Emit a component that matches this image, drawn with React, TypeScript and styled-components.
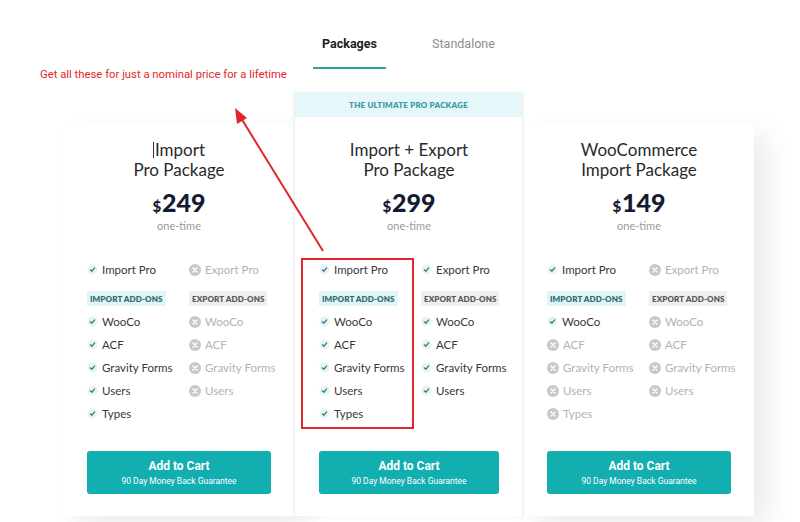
import React from "react";
import styled, { createGlobalStyle } from "styled-components";

const GlobalStyle = createGlobalStyle`
  html, body {
    margin: 0;
    padding: 0;
    background: #ffffff;
  }
  * {
    box-sizing: border-box;
  }
`;

const Page = styled.div`
  position: relative;
  width: 800px;
  height: 522px;
  overflow: hidden;
  background: #fff;
  font-family: "Lato", "Open Sans", sans-serif;
`;

const TabRow = styled.div`
  display: flex;
  gap: 41px;
  padding: 36px 0 0 313px;
`;

const Tab = styled.div<{ $active?: boolean }>`
  width: 73px;
  padding-bottom: 15px;
  text-align: center;
  font-family: "Roboto", sans-serif;
  font-size: 12.5px;
  line-height: 16px;
  font-weight: ${(p) => (p.$active ? 700 : 400)};
  color: ${(p) => (p.$active ? "#1d1d1d" : "#8d8d8d")};
  border-bottom: 2px solid ${(p) => (p.$active ? "#2aa5a0" : "transparent")};
`;

const Note = styled.div`
  position: absolute;
  left: 40px;
  top: 68px;
  font-family: "Roboto", sans-serif;
  font-size: 11.3px;
  color: #e5262b;
`;

const Highlight = styled.div`
  position: absolute;
  left: 301px;
  top: 258px;
  width: 113px;
  height: 171px;
  border: 2px solid #e0262b;
  z-index: 5;
`;

const ArrowLayer = styled.svg`
  position: absolute;
  left: 0;
  top: 0;
  z-index: 5;
  pointer-events: none;
`;

const Group = styled.div`
  display: flex;
  align-items: flex-start;
  margin: 23px 0 0 63px;
`;

const Card = styled.div<{ $featured?: boolean }>`
  position: relative;
  width: ${(p) => (p.$featured ? "229px" : "231px")};
  margin-top: ${(p) => (p.$featured ? "0" : "33px")};
  background: #fff;
  z-index: ${(p) => (p.$featured ? 2 : 1)};
  box-shadow: ${(p) =>
    p.$featured
      ? "0 0 5px rgba(0, 0, 0, 0.05)"
      : "14px 10px 26px rgba(0, 0, 0, 0.08)"};
  border-left: ${(p) => (p.$featured ? "1px solid #efefef" : "none")};
  border-right: ${(p) => (p.$featured ? "1px solid #efefef" : "none")};
`;

const Banner = styled.div`
  height: 25px;
  background: #e5f7f8;
  color: #3d9ca3;
  font-size: 8px;
  font-weight: 800;
  letter-spacing: 0.2px;
  display: flex;
  align-items: center;
  justify-content: center;
`;

const Body = styled.div<{ $featured?: boolean }>`
  padding: ${(p) => (p.$featured ? "23px" : "15px")} 23px 22px 24px;
  display: flex;
  flex-direction: column;
`;

const Title = styled.div`
  text-align: center;
  font-size: 17px;
  line-height: 20px;
  color: #2a2a2a;
`;

const Caret = styled.span`
  display: inline-block;
  width: 1px;
  height: 16px;
  margin-right: 1px;
  background: #333;
  vertical-align: -2px;
`;

const Price = styled.div`
  margin-top: 7px;
  display: flex;
  justify-content: center;
  align-items: baseline;
  line-height: 30px;
  color: #141a33;
  font-weight: 900;
`;

const Dollar = styled.span`
  font-size: 15px;
  margin-right: 1px;
`;

const Amount = styled.span`
  font-size: 25px;
`;

const Term = styled.div`
  margin-top: -2px;
  text-align: center;
  font-size: 11px;
  line-height: 14px;
  color: #9a9a9a;
`;

const Lists = styled.div`
  margin-top: 25px;
  display: grid;
  grid-template-columns: 102px 1fr;
`;

const Column = styled.div`
  display: flex;
  flex-direction: column;
`;

const Item = styled.div<{ $off?: boolean }>`
  height: 23px;
  display: flex;
  align-items: center;
  gap: 4px;
  font-size: 11.5px;
  color: ${(p) => (p.$off ? "#b3b3b3" : "#383838")};
  white-space: nowrap;
`;

const Label = styled.div<{ $kind: "import" | "export" }>`
  align-self: flex-start;
  margin: 10px 0 4px;
  height: 15px;
  padding: 0 3px;
  display: flex;
  align-items: center;
  font-size: 8px;
  font-weight: 800;
  letter-spacing: 0.1px;
  background: ${(p) => (p.$kind === "import" ? "#e2f4f5" : "#efefef")};
  color: ${(p) => (p.$kind === "import" ? "#2e6f74" : "#5a5a5a")};
`;

const Button = styled.button`
  margin-top: 26px;
  width: 100%;
  height: 43px;
  border: none;
  border-radius: 3px;
  background: #12aeb0;
  color: #fff;
  font-family: "Roboto", sans-serif;
  display: flex;
  flex-direction: column;
  align-items: center;
  justify-content: center;
  gap: 3px;
  padding: 0;
`;

const ButtonTitle = styled.span`
  font-size: 12px;
  font-weight: 700;
  line-height: 14px;
`;

const ButtonSub = styled.span`
  font-size: 8.5px;
  line-height: 10px;
`;

const Check = () => (
  <svg width="11" height="11" viewBox="0 0 12 12">
    <circle cx="6" cy="6" r="5.5" fill="#e4f5f5" />
    <path
      d="M3.6 6.3 L5.3 7.9 L8.4 4.3"
      fill="none"
      stroke="#3d7478"
      strokeWidth="1.3"
      strokeLinecap="round"
      strokeLinejoin="round"
    />
  </svg>
);

const Cross = () => (
  <svg width="12" height="12" viewBox="0 0 12 12">
    <circle cx="6" cy="6" r="6" fill="#c8c8c8" />
    <path
      d="M4 4 L8 8 M8 4 L4 8"
      stroke="#fff"
      strokeWidth="1.5"
      strokeLinecap="round"
    />
  </svg>
);

type Feature = { name: string; on: boolean };

type Plan = {
  title: string[];
  caret?: boolean;
  price: string;
  featured?: boolean;
  importPro: boolean;
  exportPro: boolean;
  importAddons: Feature[];
  exportAddons: Feature[];
};

const addons = ["WooCo", "ACF", "Gravity Forms", "Users", "Types"];
const exportNames = ["WooCo", "ACF", "Gravity Forms", "Users"];

const plans: Plan[] = [
  {
    title: ["Import", "Pro Package"],
    caret: true,
    price: "249",
    importPro: true,
    exportPro: false,
    importAddons: addons.map((name) => ({ name, on: true })),
    exportAddons: exportNames.map((name) => ({ name, on: false })),
  },
  {
    title: ["Import + Export", "Pro Package"],
    price: "299",
    featured: true,
    importPro: true,
    exportPro: true,
    importAddons: addons.map((name) => ({ name, on: true })),
    exportAddons: exportNames.map((name) => ({ name, on: true })),
  },
  {
    title: ["WooCommerce", "Import Package"],
    price: "149",
    importPro: true,
    exportPro: false,
    importAddons: addons.map((name) => ({ name, on: name === "WooCo" })),
    exportAddons: exportNames.map((name) => ({ name, on: false })),
  },
];

const Row = ({ name, on }: Feature) => (
  <Item $off={!on}>
    {on ? <Check /> : <Cross />}
    {name}
  </Item>
);

const PlanCard = ({ plan }: { plan: Plan }) => (
  <Card $featured={plan.featured}>
    {plan.featured && <Banner>THE ULTIMATE PRO PACKAGE</Banner>}
    <Body $featured={plan.featured}>
      <Title>
        {plan.caret && <Caret />}
        {plan.title[0]}
        <br />
        {plan.title[1]}
      </Title>
      <Price>
        <Dollar>$</Dollar>
        <Amount>{plan.price}</Amount>
      </Price>
      <Term>one-time</Term>
      <Lists>
        <Column>
          <Row name="Import Pro" on={plan.importPro} />
          <Label $kind="import">IMPORT ADD-ONS</Label>
          {plan.importAddons.map((f) => (
            <Row key={f.name} {...f} />
          ))}
        </Column>
        <Column>
          <Row name="Export Pro" on={plan.exportPro} />
          <Label $kind="export">EXPORT ADD-ONS</Label>
          {plan.exportAddons.map((f) => (
            <Row key={f.name} {...f} />
          ))}
        </Column>
      </Lists>
      <Button>
        <ButtonTitle>Add to Cart</ButtonTitle>
        <ButtonSub>90 Day Money Back Guarantee</ButtonSub>
      </Button>
    </Body>
  </Card>
);

export default function App() {
  return (
    <Page>
      <GlobalStyle />
      <TabRow>
        <Tab $active>Packages</Tab>
        <Tab>Standalone</Tab>
      </TabRow>
      <Note>Get all these for just a nominal price for a lifetime</Note>
      <Group>
        {plans.map((p) => (
          <PlanCard key={p.price} plan={p} />
        ))}
      </Group>
      <Highlight />
      <ArrowLayer width="800" height="522" viewBox="0 0 800 522">
        <line
          x1="323"
          y1="251"
          x2="241"
          y2="118"
          stroke="#e0262b"
          strokeWidth="2"
        />
        <polygon points="235,108 237,124 247,118" fill="#e0262b" />
      </ArrowLayer>
    </Page>
  );
}
